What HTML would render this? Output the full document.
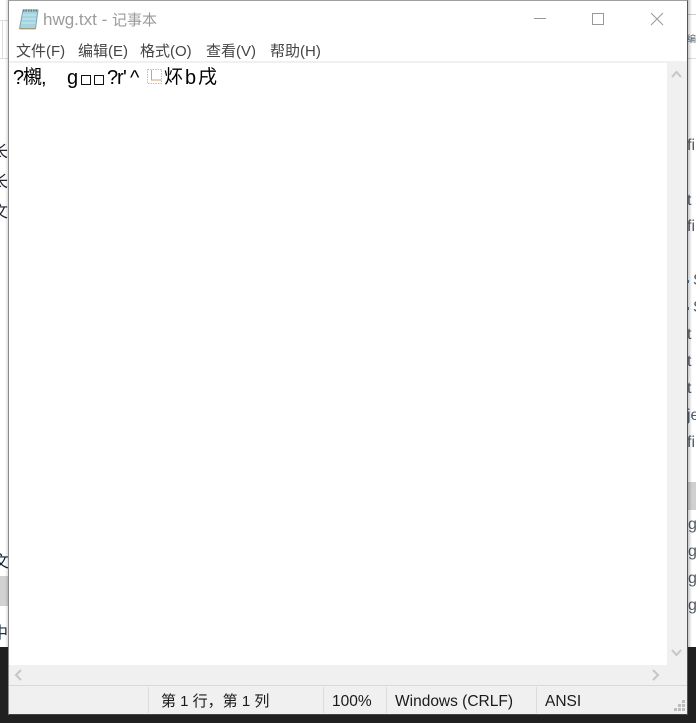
<!DOCTYPE html>
<html lang="zh"><head><meta charset="utf-8"><style>
html,body{margin:0;padding:0;width:696px;height:723px;overflow:hidden;background:#fff}
body{position:relative;font-family:"Liberation Sans","Noto Sans CJK SC",sans-serif;color:#000}
.a{position:absolute;white-space:nowrap}
.m{top:43px;font-size:15px;line-height:18px;color:#444}
.s{top:692px;font-size:15.5px;line-height:18px;color:#1a1a1a}
.bg{font-size:16px;line-height:18px;color:#505a66}
.t{top:67px;font-size:20px;line-height:22px;color:#000}
.c{font-size:19px}
.q{top:75px;width:8px;height:8px;border:1px solid #111}
</style></head><body>
<!-- background -->
<div class="a" style="left:0;top:647px;width:696px;height:76px;background:#202020"></div>
<div class="a" style="left:0;top:576px;width:9px;height:30px;background:#d2d2d2"></div>
<div class="a" style="left:687px;top:482px;width:9px;height:28px;background:#d0d0d0"></div>
<div class="a" style="left:0;top:20px;width:9px;height:1px;background:#ddd"></div>
<div class="a" style="left:2px;top:20px;width:1px;height:38px;background:#ddd"></div>
<div class="a" style="left:0;top:58px;width:9px;height:1px;background:#ddd"></div>
<div class="a" style="left:687px;top:14px;width:9px;height:1px;background:#ccc"></div>
<div class="a" style="left:687px;top:58px;width:9px;height:1px;background:#ddd"></div>
<div class="a" style="left:687px;top:34px;font-size:9px;line-height:10px;color:#567;width:9px;overflow:hidden">编</div>
<div class="a bg" style="left:-8px;top:144px;color:#223">长</div>
<div class="a bg" style="left:-8px;top:174px;color:#223">长</div>
<div class="a bg" style="left:-8px;top:204px;color:#223">文</div>
<div class="a bg" style="left:-7px;top:554px;color:#123">文(</div>
<div class="a bg" style="left:-8px;top:625px;color:#234">中</div>
<div style="position:absolute;left:687px;top:0;width:9px;height:647px;overflow:hidden">
<div class="a bg" style="left:0;top:137px">fil</div>
<div class="a bg" style="left:0;top:192px">t</div>
<div class="a bg" style="left:0;top:218px">fil</div>
<div class="a" style="left:0;top:280px;width:2px;height:3px;background:#4a7fa8"></div>
<div class="a bg" style="left:6px;top:272px">S</div>
<div class="a" style="left:0;top:307px;width:2px;height:3px;background:#4a7fa8"></div>
<div class="a bg" style="left:6px;top:299px">S</div>
<div class="a bg" style="left:0;top:326px">t</div>
<div class="a bg" style="left:0;top:353px">t</div>
<div class="a bg" style="left:0;top:380px">t</div>
<div class="a bg" style="left:0;top:407px">je</div>
<div class="a bg" style="left:0;top:434px">fil</div>
<div class="a bg" style="left:1px;top:516px">g</div>
<div class="a bg" style="left:1px;top:543px">g</div>
<div class="a bg" style="left:1px;top:570px">g</div>
<div class="a bg" style="left:1px;top:597px">g</div>
</div>
<!-- shadows -->
<div class="a" style="left:688px;top:0;width:4px;height:647px;background:linear-gradient(90deg,rgba(0,0,0,.22),rgba(0,0,0,0))"></div>
<div class="a" style="left:5px;top:0;width:4px;height:647px;background:linear-gradient(270deg,rgba(0,0,0,.18),rgba(0,0,0,0))"></div>
<!-- window -->
<div class="a" style="left:8px;top:0;background:#fff;border-right:1px solid #555;border-bottom:1px solid #444;border-left:1px solid #8a8a8a;border-top:1px solid #a0a0a0;box-sizing:border-box;width:680px;height:715px"></div>
<!-- notepad icon -->
<svg class="a" style="left:18px;top:8px" width="22" height="22" viewBox="0 0 22 22">
<path d="M5 2H20L17.500 20.500H1.500Z" fill="#a6d3e0" stroke="#7ba5b5"/>
<path d="M4.500 7H18.500M4 11H18M3.500 15H17.500" stroke="#bfe2ea" stroke-width="1.500"/>
<path d="M5 2.500H20" stroke="#6b8796" stroke-width="2.500" stroke-dasharray="1.500 1"/>
<path d="M1.500 20.800H17.500" stroke="#b09a72" stroke-width="1.200"/>
</svg>
<div class="a" style="left:43px;top:10px;line-height:20px;color:#9b9b9b;font-size:15px"><span style="font-size:17px">hwg.txt - </span>记事本</div>
<!-- window controls -->
<svg class="a" style="left:530px;top:8px" width="145" height="22" viewBox="0 0 145 22" fill="none" stroke="#999">
<path d="M4 10.500H16"/>
<path d="M62.500 5.500H73.500V16.500H62.500Z"/>
<path d="M121 5L133 17M133 5L121 17"/>
</svg>
<!-- menu -->
<div class="a m" style="left:16px">文件(F)</div>
<div class="a m" style="left:78px">编辑(E)</div>
<div class="a m" style="left:140px">格式(O)</div>
<div class="a m" style="left:206px">查看(V)</div>
<div class="a m" style="left:270px">帮助(H)</div>
<div class="a" style="left:9px;top:61px;width:678px;height:2px;background:#f0f0f0"></div>
<!-- text -->
<div class="a t" style="left:13px">?</div>
<div class="a t c" style="left:23px">櫬</div>
<div class="a t" style="left:41px">,</div>
<div class="a t" style="left:67px">g</div>
<div class="a q" style="left:81px"></div>
<div class="a q" style="left:94px"></div>
<div class="a t" style="left:107px">?</div>
<div class="a t" style="left:117px">r</div>
<div class="a t" style="left:123px">'</div>
<div class="a t" style="left:130px">^</div>
<svg class="a" style="left:146px;top:68px" width="18" height="18" fill="none">
<rect x="1.500" y="1.500" width="14" height="14" stroke="#bdbdbd" stroke-dasharray="1.500 1"/>
<path d="M5.500 2V12H15" stroke="#d8a070"/>
</svg>
<div class="a t c" style="left:164px">炋</div>
<div class="a t" style="left:185px">b</div>
<div class="a t c" style="left:198px">戌</div>
<!-- scrollbars -->
<div class="a" style="left:667px;top:63px;width:20px;height:622px;background:#f0f0f0"></div>
<div class="a" style="left:9px;top:665px;width:678px;height:20px;background:#f0f0f0"></div>
<svg class="a" style="left:0;top:0" width="696" height="723" viewBox="0 0 696 723" fill="none" stroke="#c6c6c6" stroke-width="2">
<path d="M672 77L676.500 72L681 77"/>
<path d="M672 650L676.500 655L681 650"/>
<path d="M21 670L16 675L21 680"/>
<path d="M653 670L658 675L653 680"/>
</svg>
<!-- status bar -->
<div class="a" style="left:9px;top:685px;width:678px;height:29px;background:#f0f0f0;border-top:1px solid #d9d9d9;box-sizing:border-box"></div>
<div class="a" style="left:148px;top:687px;width:1px;height:26px;background:#dcdcdc"></div>
<div class="a" style="left:323px;top:687px;width:1px;height:26px;background:#dcdcdc"></div>
<div class="a" style="left:386px;top:687px;width:1px;height:26px;background:#dcdcdc"></div>
<div class="a" style="left:536px;top:687px;width:1px;height:26px;background:#dcdcdc"></div>
<div class="a s" style="left:161px;top:693px;font-size:15px">第 1 行，第 1 列</div>
<div class="a s" style="left:332px;top:693px">100%</div>
<div class="a s" style="left:395px;top:693px">Windows (CRLF)</div>
<div class="a s" style="left:545px;top:693px">ANSI</div>
<svg class="a" style="left:674px;top:700px" width="12" height="12" fill="#bcbcbc">
<rect x="8" y="0" width="3" height="3"/><rect x="4" y="4" width="3" height="3"/><rect x="8" y="4" width="3" height="3"/><rect x="0" y="8" width="3" height="3"/><rect x="4" y="8" width="3" height="3"/><rect x="8" y="8" width="3" height="3"/>
</svg>
</body></html>
